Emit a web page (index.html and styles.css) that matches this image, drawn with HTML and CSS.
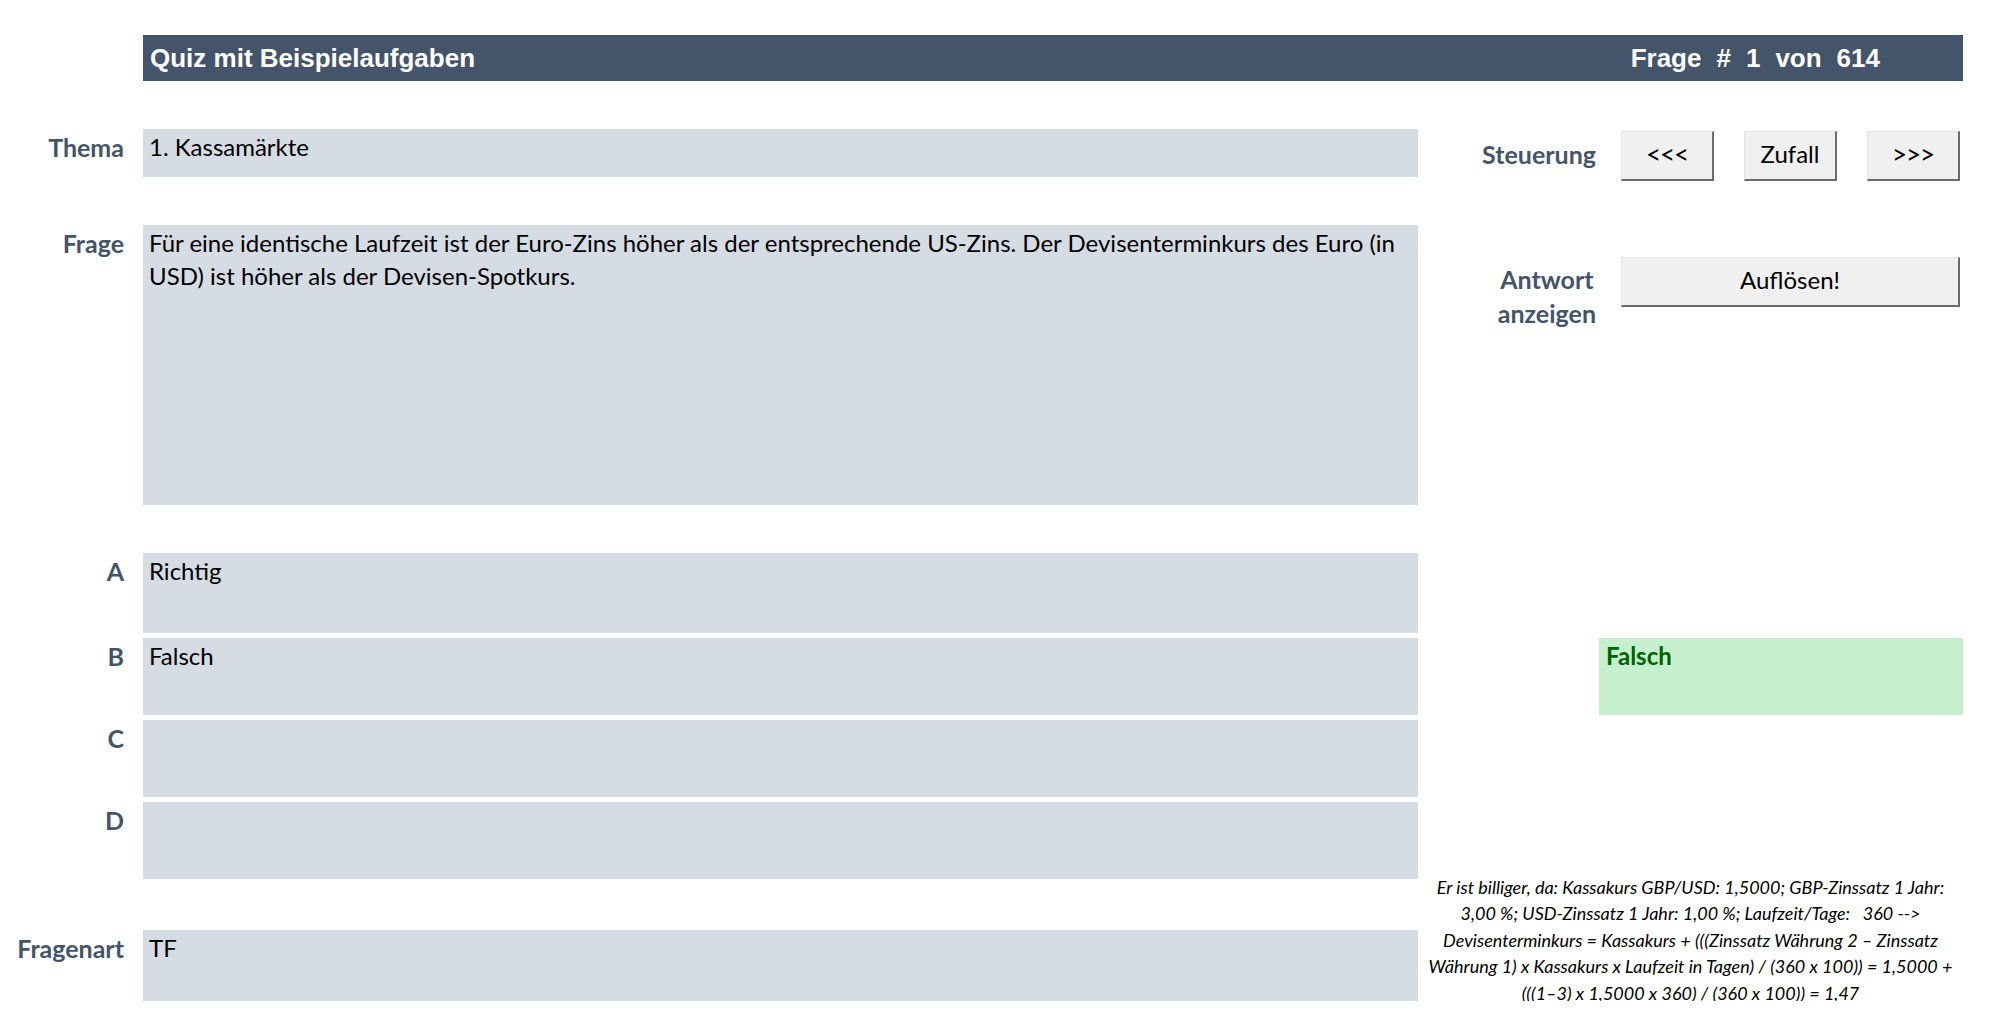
FILE: index.html
```html
<!DOCTYPE html>
<html lang="de">
<head>
<meta charset="utf-8">
<title>Quiz mit Beispielaufgaben</title>
<link rel="stylesheet" href="styles.css">
</head>
<body>
<div class="sheet">
  <header class="title-bar">
    <span class="title">Quiz mit Beispielaufgaben</span>
    <span class="counter"><span>Frage</span><span>#</span><span>1</span><span>von</span><span>614</span></span>
  </header>

  <main class="grid">
    <div class="label row-thema">Thema</div>
    <div class="box row-thema">1. Kassamärkte</div>
    <div class="side controls row-thema">
      <span class="side-label">Steuerung</span>
      <div class="btn-group">
        <button class="btn btn-arrow">&lt;&lt;&lt;</button>
        <button class="btn">Zufall</button>
        <button class="btn btn-arrow">&gt;&gt;&gt;</button>
      </div>
    </div>

    <div class="label row-frage">Frage</div>
    <div class="box row-frage">Für eine identische Laufzeit ist der Euro-Zins höher als der entsprechende US-Zins. Der Devisenterminkurs des Euro (in USD) ist höher als der Devisen-Spotkurs.</div>
    <div class="side answer row-frage">
      <div class="side-label"><span class="two-line">Antwort<br>anzeigen</span></div>
      <div class="btn-group">
        <button class="btn btn-wide">Auflösen!</button>
      </div>
    </div>

    <div class="label row-a">A</div>
    <div class="box row-a">Richtig</div>

    <div class="label row-b">B</div>
    <div class="box row-b">Falsch</div>
    <div class="side result row-b">Falsch</div>

    <div class="label row-c">C</div>
    <div class="box row-c"></div>

    <div class="label row-d">D</div>
    <div class="box row-d"></div>

    <div class="side note">
      <p>Er ist billiger, da: Kassakurs GBP/USD: 1,5000; GBP-Zinssatz 1 Jahr:<br>3,00 %; USD-Zinssatz 1 Jahr: 1,00 %; Laufzeit/Tage: &nbsp; 360 --&gt;<br>Devisenterminkurs = Kassakurs + (((Zinssatz Währung 2 – Zinssatz<br>Währung 1) x Kassakurs x Laufzeit in Tagen) / (360 x 100)) = 1,5000 +<br>(((1–3) x 1,5000 x 360) / (360 x 100)) = 1,47</p>
    </div>

    <div class="label row-art">Fragenart</div>
    <div class="box row-art">TF</div>
  </main>
</div>
</body>
</html>
```

FILE: styles.css
```css
* {
  box-sizing: border-box;
  margin: 0;
  padding: 0;
}

html, body {
  background: #ffffff;
}

body {
  font-family: Lato, "Liberation Sans", sans-serif;
  color: #000000;
}

.sheet {
  width: 2008px;
  padding-top: 35px;
}

/* ---------- title bar ---------- */
.title-bar {
  margin-left: 143px;
  width: 1820px;
  height: 46px;
  background: #44546a;
  color: #ffffff;
  font-family: "Liberation Sans", Arial, sans-serif;
  font-weight: 700;
  font-size: 26px;
  display: flex;
  align-items: center;
  justify-content: space-between;
  padding: 0 83px 0 7px;
}

.counter {
  display: flex;
  gap: 15px;
}

/* ---------- sheet grid ---------- */
.grid {
  margin-top: 48px;
  display: grid;
  grid-template-columns: 143px 1275px 545px;
  grid-template-rows: 48px 48px 280px 48px 80px 5px 77px 5px 77px 5px 77px 51px 71px;
}

.row-thema { grid-row: 1; }
.row-frage { grid-row: 3; }
.row-a { grid-row: 5; }
.row-b { grid-row: 7; }
.row-c { grid-row: 9; }
.row-d { grid-row: 11; }
.row-art { grid-row: 13; }

.label {
  grid-column: 1;
  font-weight: 700;
  color: #44546a;
  font-size: 25px;
  line-height: 33px;
  padding: 2px 19px 0 0;
  text-align: right;
}

.box {
  grid-column: 2;
  background: #d6dce4;
  font-size: 24px;
  line-height: 33px;
  padding: 1px 6px;
}

.side {
  grid-column: 3;
}

/* ---------- controls ---------- */
.side-label {
  flex: 0 0 181px;
  width: 181px;
  padding-right: 3px;
  text-align: right;
  font-weight: 700;
  color: #44546a;
  font-size: 25px;
}

.controls {
  display: flex;
  align-items: flex-start;
  padding-top: 2px;
}

.controls .side-label {
  line-height: 46px;
}

.answer {
  display: flex;
  align-items: flex-start;
  padding-top: 32px;
}

.answer .side-label {
  line-height: 34px;
  margin-top: 5px;
}

.two-line {
  display: inline-block;
  text-align: center;
}

.btn-group {
  display: flex;
  gap: 30px;
  margin-left: 22px;
}

.btn {
  width: 93px;
  height: 50px;
  padding-bottom: 4px;
  background: #f0f0f0;
  border: none;
  border-top: 1px solid #e4e4e4;
  border-left: 1px solid #e4e4e4;
  border-right: 2px solid #6b6b6b;
  border-bottom: 2px solid #6b6b6b;
  font-family: Lato, "Liberation Sans", sans-serif;
  font-size: 24px;
  color: #000000;
}

.btn-arrow {
  font-size: 26px;
  letter-spacing: -1px;
}

.btn-wide {
  width: 339px;
}

/* ---------- result + note ---------- */
.result {
  margin-left: 181px;
  background: #c6efce;
  color: #006100;
  font-weight: 700;
  font-size: 24px;
  line-height: 33px;
  padding: 1px 7px;
}

.note {
  grid-row: 12 / 14;
  display: flex;
  align-items: center;
  justify-content: center;
  text-align: center;
  font-style: italic;
  font-size: 18px;
  line-height: 26.5px;
  white-space: nowrap;
}
```
